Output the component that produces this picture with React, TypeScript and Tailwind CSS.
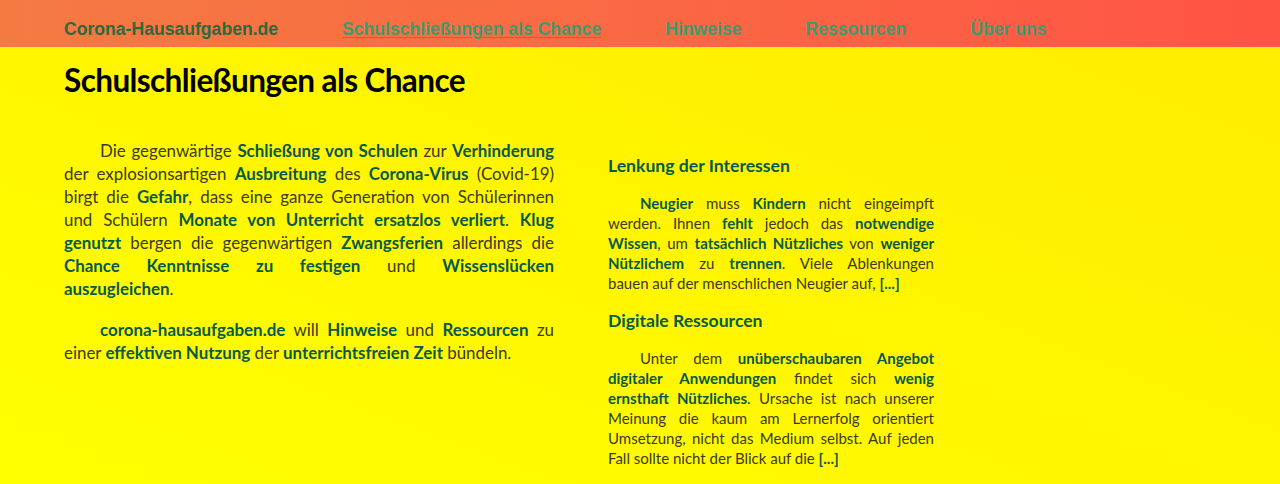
const nav = [
  { label: 'Schulschließungen als Chance', active: true },
  { label: 'Hinweise' },
  { label: 'Ressourcen' },
  { label: 'Über uns' },
];

function B({ children }: { children: React.ReactNode }) {
  return <strong className="font-bold text-[#07594a]">{children}</strong>;
}

// Each line is its own block, stretched to the full width like the justified original.
function Line({ children, first, last }: { children: React.ReactNode; first?: boolean; last?: boolean }) {
  return (
    <span
      className={`block whitespace-nowrap ${last ? 'text-left' : 'text-justify [text-align-last:justify]'} ${first ? 'indent-9' : ''}`}
    >
      {children}
    </span>
  );
}

function SmallLine({ children, first, last }: { children: React.ReactNode; first?: boolean; last?: boolean }) {
  return (
    <span
      className={`block whitespace-nowrap ${last ? 'text-left' : 'text-justify [text-align-last:justify]'} ${first ? 'indent-8' : ''}`}
    >
      {children}
    </span>
  );
}

export default function App() {
  return (
    <div className="min-h-[484px] bg-linear-to-bl from-[#ffec00] to-[#ffff00] font-['Lato','Noto_Sans',sans-serif] text-[#3a3a26]">
      <nav className="flex h-[47px] items-center gap-16 bg-linear-to-r from-[#f47a42] to-[#ff5344] px-16 pt-[12px] font-['Liberation_Sans',Arial,sans-serif] text-[17.6px] font-bold">
        <span className="text-[#2a6b3d]">Corona-Hausaufgaben.de</span>
        {nav.map((item) => (
          <a
            key={item.label}
            href="#"
            className={`text-[#3f9a6c] ${item.active ? 'underline underline-offset-2' : ''}`}
          >
            {item.label}
          </a>
        ))}
      </nav>

      <main className="px-16">
        <h1 className="pt-[14px] text-[31.5px] leading-[38px] font-bold tracking-[-0.6px] text-black">
          Schulschließungen als Chance
        </h1>

        <div className="mt-[40px] flex">
          <section className="w-[490px] text-[16.9px] leading-[23px]">
            <p>
              <Line first>
                Die gegenwärtige <B>Schließung von Schulen</B> zur <B>Verhinderung</B>
              </Line>
              <Line>
                der explosionsartigen <B>Ausbreitung</B> des <B>Corona-Virus</B> (Covid-19)
              </Line>
              <Line>
                birgt die <B>Gefahr</B>, dass eine ganze Generation von Schülerinnen
              </Line>
              <Line>
                und Schülern <B>Monate von Unterricht ersatzlos verliert</B>. <B>Klug</B>
              </Line>
              <Line>
                <B>genutzt</B> bergen die gegenwärtigen <B>Zwangsferien</B> allerdings die
              </Line>
              <Line>
                <B>Chance Kenntnisse zu festigen</B> und <B>Wissenslücken</B>
              </Line>
              <Line last>
                <B>auszugleichen</B>.
              </Line>
            </p>
            <p className="mt-[18px]">
              <Line first>
                <B>corona-hausaufgaben.de</B> will <B>Hinweise</B> und <B>Ressourcen</B> zu
              </Line>
              <Line last>
                einer <B>effektiven Nutzung</B> der <B>unterrichtsfreien Zeit</B> bündeln.
              </Line>
            </p>
          </section>

          <section className="ml-[54px] w-[326px] pt-[14px] text-[15px] leading-[20px]">
            <h2 className="text-[17.6px] leading-[26px] font-bold text-[#07594a]">
              Lenkung der Interessen
            </h2>
            <p className="mt-[14px]">
              <SmallLine first>
                <B>Neugier</B> muss <B>Kindern</B> nicht eingeimpft
              </SmallLine>
              <SmallLine>
                werden. Ihnen <B>fehlt</B> jedoch das <B>notwendige</B>
              </SmallLine>
              <SmallLine>
                <B>Wissen</B>, um <B>tatsächlich Nützliches</B> von <B>weniger</B>
              </SmallLine>
              <SmallLine>
                <B>Nützlichem</B> zu <B>trennen</B>. Viele Ablenkungen
              </SmallLine>
              <SmallLine last>
                bauen auf der menschlichen Neugier auf, <B>[...]</B>
              </SmallLine>
            </p>
            <h2 className="mt-[15px] text-[17.6px] leading-[26px] font-bold text-[#07594a]">
              Digitale Ressourcen
            </h2>
            <p className="mt-[14px]">
              <SmallLine first>
                Unter dem <B>unüberschaubaren Angebot</B>
              </SmallLine>
              <SmallLine>
                <B>digitaler Anwendungen</B> findet sich <B>wenig</B>
              </SmallLine>
              <SmallLine>
                <B>ernsthaft Nützliches</B>. Ursache ist nach unserer
              </SmallLine>
              <SmallLine>Meinung die kaum am Lernerfolg orientiert</SmallLine>
              <SmallLine>Umsetzung, nicht das Medium selbst. Auf jeden</SmallLine>
              <SmallLine last>
                Fall sollte nicht der Blick auf die <B>[...]</B>
              </SmallLine>
            </p>
          </section>
        </div>
      </main>
    </div>
  );
}
